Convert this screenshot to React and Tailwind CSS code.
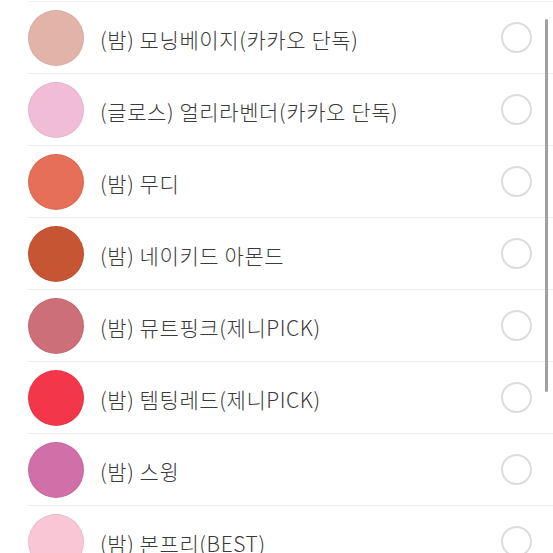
import React from 'react';

const items = [
    { label: '(밤) 모닝베이지(카카오 단독)', color: '#e2b4a9' },
    { label: '(글로스) 얼리라벤더(카카오 단독)', color: '#f1bdd6' },
    { label: '(밤) 무디', color: '#e66f58' },
    { label: '(밤) 네이키드 아몬드', color: '#c65633' },
    { label: '(밤) 뮤트핑크(제니PICK)', color: '#cd6f79' },
    { label: '(밤) 템팅레드(제니PICK)', color: '#f3364a' },
    { label: '(밤) 스윙', color: '#d06fa8' },
    { label: '(밤) 본프리(BEST)', color: '#f8c6d4' },
];

export default function App() {
    return (
        <div className="relative w-[553px] h-[553px] overflow-hidden bg-white font-['Noto_Sans_CJK_KR','Noto_Sans',sans-serif]">
            <div className="ml-[28px] mt-[1px] border-t border-[#f1f1f1]">
                {items.map((item, idx) => (
                    <div key={idx} className="flex items-center h-[72px] border-b border-[#ececec] pr-[21px]">
                        <div
                            className="w-[56px] h-[56px] rounded-full shrink-0 border border-black/5"
                            style={{ backgroundColor: item.color }}
                        />
                        <span className="ml-[16px] mt-[4px] flex-1 whitespace-nowrap text-[21px] font-light text-[#3a3a3a] tracking-[0.6px] leading-none">
                            {item.label}
                        </span>
                        <div className="w-[31px] h-[31px] rounded-full border-2 border-[#dcdcdc] shrink-0" />
                    </div>
                ))}
            </div>
            {/* scrollbar */}
            <div className="absolute left-[545px] top-[19px] w-[3px] h-[373px] rounded-full bg-[#a0a0a0]" />
        </div>
    );
}
